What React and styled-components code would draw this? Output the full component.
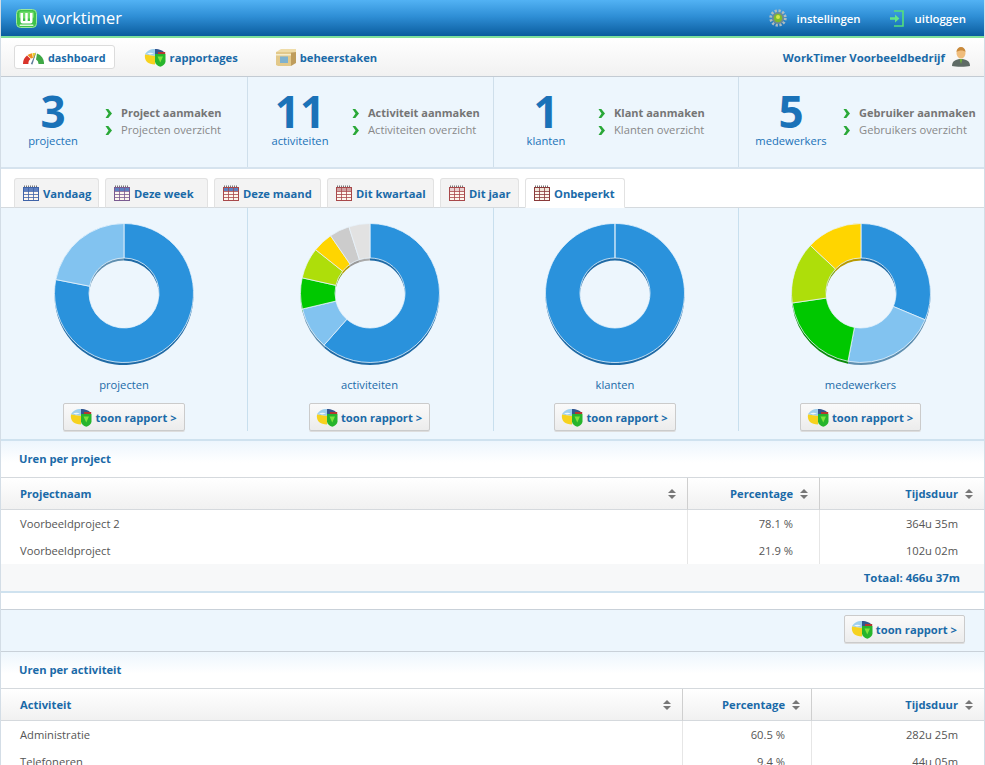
import { styled, createGlobalStyle } from 'styled-components';

const GlobalStyle = createGlobalStyle`
  html, body {
    margin: 0;
    padding: 0;
    overflow: hidden;
    background: #fff;
    font-family: "Open Sans", "Liberation Sans", sans-serif;
    font-size: 11.2px;
    color: #555;
  }
`;

const Page = styled.div`
  width: 985px;
  height: 765px;
  overflow: hidden;
  box-sizing: border-box;
  border-left: 1px solid #d3dde6;
  border-right: 1px solid #d3dde6;
`;

const Header = styled.header`
  height: 36px;
  margin: 0 -1px;
  display: flex;
  align-items: center;
  justify-content: space-between;
  padding: 0 19px 0 16px;
  background: linear-gradient(to bottom, #52b2f4, #2f8fd6 45%, #0a5c9e);
  border-bottom: 2px solid #7fe09c;
`;

const Logo = styled.div`
  display: flex;
  align-items: center;
  gap: 6px;
  color: #fff;
  font-size: 16.4px;
  line-height: 24px;
`;

const HeaderLinks = styled.div`
  display: flex;
  align-items: center;
  gap: 28px;
`;

const HeaderLink = styled.a`
  display: flex;
  align-items: center;
  gap: ${(p) => p.$gap || 10}px;
  color: #fff;
  font-weight: 600;
  font-size: 11.4px;
`;

const Nav = styled.nav`
  height: 38px;
  display: flex;
  align-items: center;
  padding: 0 14px 0 13px;
  background: linear-gradient(to bottom, #fff, #f1f1f1);
  border-bottom: 1px solid #c3cbd3;
`;

const NavItem = styled.a`
  display: flex;
  align-items: center;
  gap: 4px;
  height: 24px;
  box-sizing: border-box;
  padding: 0 8px;
  margin-right: ${(p) => p.$space}px;
  color: #1a6aa8;
  font-weight: 700;
  font-size: ${(p) => (p.$active ? '10.8px' : '11.2px')};
  background: ${(p) => (p.$active ? '#fff' : 'transparent')};
  border: 1px solid ${(p) => (p.$active ? '#dcdcdc' : 'transparent')};
  border-radius: 3px;
`;

const Company = styled.div`
  margin-left: auto;
  display: flex;
  align-items: center;
  gap: 7px;
  color: #1a6aa8;
  font-weight: 700;
  font-size: 11.4px;
`;

const Columns = styled.div`
  display: grid;
  grid-template-columns: 247px 246px 245px 1fr;
`;

const StatsBar = styled(Columns)`
  height: 90px;
  background: #edf6fd;
  border-bottom: 2px solid #d6e3ee;
`;

const StatCell = styled.div`
  display: grid;
  grid-template-columns: 104px 1fr;
  align-items: center;
  border-right: ${(p) => (p.$last ? 'none' : '1px solid #cfdfeb')};
`;

const StatCount = styled.div`
  display: flex;
  flex-direction: column;
  align-items: center;
  color: #1a72b8;
`;

const StatNumber = styled.div`
  font-size: 44px;
  font-weight: 700;
  line-height: 33px;
  margin-bottom: 5px;
`;

const StatLabel = styled.div`
  line-height: 16px;
`;

const StatLinks = styled.div`
  display: flex;
  flex-direction: column;
  gap: 1px;
  padding-bottom: 1px;
`;

const StatLink = styled.a`
  display: flex;
  align-items: center;
  gap: 9px;
  line-height: 16px;
  white-space: nowrap;
  color: ${(p) => (p.$strong ? '#757575' : '#888')};
  font-weight: ${(p) => (p.$strong ? 700 : 400)};
  font-size: ${(p) => (p.$strong ? '11px' : '11.2px')};
`;

const TabBar = styled.div`
  height: 38px;
  display: flex;
  align-items: flex-end;
  gap: 6px;
  padding-left: 13px;
  border-bottom: 1px solid #d5dade;
`;

const Tab = styled.a`
  width: ${(p) => p.$width}px;
  height: 30px;
  box-sizing: border-box;
  display: flex;
  align-items: center;
  gap: 4px;
  padding-left: 8px;
  margin-bottom: -1px;
  color: #1a6aa8;
  font-weight: 700;
  background: ${(p) => (p.$active ? '#fff' : '#f3f3f3')};
  border: 1px solid #e2e2e2;
  border-bottom: ${(p) => (p.$active ? '1px solid #fff' : '1px solid #d5dade')};
  border-radius: 3px 3px 0 0;
`;

const ChartRow = styled(Columns)`
  background: #edf6fd;
  height: 231px;
  border-bottom: 2px solid #cfe2ef;
`;

const ChartCell = styled.div`
  height: 223px;
  display: flex;
  flex-direction: column;
  align-items: center;
  padding-top: 10px;
  box-sizing: border-box;
  border-right: ${(p) => (p.$last ? 'none' : '1px solid #c8dfee')};
  &:not(:first-child) {
    padding-right: 2px;
  }
`;

const ChartLabel = styled.div`
  color: #1a6aa8;
  line-height: 16px;
  margin-top: 9px;
`;

const ReportButton = styled.a`
  height: 28px;
  box-sizing: border-box;
  display: flex;
  align-items: center;
  gap: 3px;
  padding: 0 7px 0 6px;
  margin-top: ${(p) => p.$top || 0}px;
  color: #1a6aa8;
  font-weight: 700;
  background: linear-gradient(to bottom, #fafafa, #ececec);
  border: 1px solid #cbcbcb;
  border-radius: 2px;
  box-shadow: 0 1px 0 #ddd;
`;

const SectionTitle = styled.h2`
  margin: 0;
  height: 36px;
  padding-left: 18px;
  font-size: 11.2px;
  font-weight: 700;
  line-height: 35px;
  color: #1a6aa8;
  background: linear-gradient(to bottom, #edf6fd, #fff 60%);
  border-bottom: 1px solid #d5d9dd;
`;

const TableRow = styled.div`
  display: grid;
  grid-template-columns: ${(p) => p.$cols};
`;

const HeadCell = styled.div`
  height: 32px;
  display: flex;
  align-items: center;
  justify-content: ${(p) => (p.$left ? 'space-between' : 'flex-end')};
  gap: 7px;
  padding: 0 11px 0 19px;
  box-sizing: border-box;
  color: #1a6aa8;
  font-weight: 700;
  background: linear-gradient(to bottom, #fff, #f1f1f1);
  border-bottom: 1px solid #d5d9dd;
  border-right: ${(p) => (p.$last ? 'none' : '1px solid #cfcfcf')};
`;

const BodyCell = styled.div`
  height: 27px;
  line-height: 27px;
  padding: 0 26px 0 19px;
  color: #555;
  text-align: ${(p) => (p.$left ? 'left' : 'right')};
  border-right: ${(p) => (p.$last ? 'none' : '1px solid #e6e6e6')};
`;

const TotalRow = styled.div`
  height: 27px;
  line-height: 27px;
  text-align: right;
  padding-right: 24px;
  color: #1a6aa8;
  font-weight: 700;
  font-size: 11.4px;
  background: #f7f8f9;
  border-bottom: 2px solid #cfe2ef;
`;

const Spacer = styled.div`
  height: 16px;
  border-bottom: 1px solid #c9d1d9;
`;

const ActionBar = styled.div`
  height: 41px;
  display: flex;
  align-items: center;
  justify-content: flex-end;
  padding-right: 19px;
  background: #edf6fd;
  border-bottom: 1px solid #c9d1d9;
`;

const ActionSlot = styled.div`
  margin-bottom: 3px;
`;

const polar = (r, pct, cx, cy) => {
  const a = (pct / 100) * Math.PI * 2;
  return [cx + r * Math.sin(a), cy - r * Math.cos(a)];
};

// ring segment between two percentages
const slicePath = (from, to, cx, cy) => {
  const outer = 69.5;
  const inner = 35;
  const end = to >= 100 ? 99.99 : to;
  const large = end - from > 50 ? 1 : 0;
  const [x1, y1] = polar(outer, from, cx, cy);
  const [x2, y2] = polar(outer, end, cx, cy);
  const [x3, y3] = polar(inner, end, cx, cy);
  const [x4, y4] = polar(inner, from, cx, cy);
  return `M${x1} ${y1}A${outer} ${outer} 0 ${large} 1 ${x2} ${y2}L${x3} ${y3}A${inner} ${inner} 0 ${large} 0 ${x4} ${y4}Z`;
};

function Donut({ slices }) {
  const spans = [];
  let total = 0;
  slices.forEach(([pct, color, shade]) => {
    spans.push({ from: total, to: total + pct, color, shade });
    total += pct;
  });
  return (
    <svg width="150" height="150" viewBox="0 0 150 150">
      {spans.map((s) => (
        <path key={s.color} d={slicePath(s.from, s.to, 75, 77.5)} fill={s.shade} />
      ))}
      {spans.map((s) => (
        <path key={s.color} d={slicePath(s.from, s.to, 75, 75)} fill={s.color} stroke="#e8f4fc" strokeWidth="0.8" />
      ))}
    </svg>
  );
}

const BLUE = ['#2a92dc', '#1f6aa5'];
const LIGHT = ['#82c3f0', '#5f8fb0'];
const GREEN = ['#00c800', '#0a8a0a'];
const LIME = ['#aede0a', '#7ea008'];
const YELLOW = ['#ffd500', '#b89a00'];
const GRAY = ['#cccccc', '#999999'];
const PALE = ['#e2e2e2', '#aaaaaa'];

const charts = [
  { label: 'projecten', slices: [[78.1, ...BLUE], [21.9, ...LIGHT]] },
  {
    label: 'activiteiten',
    slices: [[61.5, ...BLUE], [9.8, ...LIGHT], [7.2, ...GREEN], [7.2, ...LIME], [4.7, ...YELLOW], [4.7, ...GRAY], [4.9, ...PALE]],
  },
  { label: 'klanten', slices: [[100, ...BLUE]] },
  {
    label: 'medewerkers',
    slices: [[31.3, ...BLUE], [21.7, ...LIGHT], [19.7, ...GREEN], [14.3, ...LIME], [13, ...YELLOW]],
  },
];

const stats = [
  { n: 3, label: 'projecten', make: 'Project aanmaken', list: 'Projecten overzicht' },
  { n: 11, label: 'activiteiten', make: 'Activiteit aanmaken', list: 'Activiteiten overzicht' },
  { n: 1, label: 'klanten', make: 'Klant aanmaken', list: 'Klanten overzicht' },
  { n: 5, label: 'medewerkers', make: 'Gebruiker aanmaken', list: 'Gebruikers overzicht' },
];

const tabs = [
  { label: 'Vandaag', width: 85, tone: '#3f63a8', head: '#5d7fc0' },
  { label: 'Deze week', width: 103, tone: '#7a5a90', head: '#5d7fc0' },
  { label: 'Deze maand', width: 107, tone: '#a8484a', head: '#5d7fc0' },
  { label: 'Dit kwartaal', width: 107, tone: '#a8484a', head: '#cfa0a0' },
  { label: 'Dit jaar', width: 79, tone: '#a8484a', head: '#e8d0d0' },
  { label: 'Onbeperkt', width: 100, tone: '#8a3a3a', head: '#f0e4d8', active: true },
];

function LogoIcon() {
  return (
    <svg width="21" height="19" viewBox="0 0 21 19">
      <rect x="0.5" y="0.5" width="20" height="18" rx="4" fill="#3fc24a" stroke="#9be89f" />
      <rect x="3" y="2.500" width="15" height="7" rx="2" fill="#6fdc6a" />
      <path d="M4.500 4v8.500a2 2 0 0 0 2 2h8a2 2 0 0 0 2-2V4h-2.500v8h-2.300V4h-2.400v8H7V4z" fill="#fff" />
      <rect x="3.500" y="15.500" width="14" height="1.500" rx="0.700" fill="#dff7dc" />
    </svg>
  );
}

function GearIcon() {
  return (
    <svg width="18" height="18" viewBox="0 0 18 18">
      <circle cx="9" cy="9" r="7.200" fill="none" stroke="#aebcc0" strokeWidth="3" strokeDasharray="2.200 1.600" />
      <circle cx="9" cy="9" r="6" fill="#6f8a94" />
      <circle cx="9" cy="9" r="4.200" fill="#7fbb2c" />
      <circle cx="9" cy="8" r="2" fill="#d8e84a" />
    </svg>
  );
}

function LogoutIcon() {
  return (
    <svg width="15" height="17" viewBox="0 0 15 17">
      <path d="M5 1h9v15H5" fill="none" stroke="#55e07a" strokeWidth="1.600" />
      <path d="M1 7.200h5V4.600l4.400 3.900L6 12.400V9.800H1z" fill="#63e585" />
    </svg>
  );
}

function GaugeIcon() {
  return (
    <svg width="21" height="16" viewBox="0 0 21 16">
      <path d="M0 15a10.500 10.500 0 0 1 4-8.500L7.500 10a5 5 0 0 0-2 5z" fill="#d9342b" />
      <path d="M4.500 6A10.500 10.500 0 0 1 9 4.200L10 9a5 5 0 0 0-2 .6z" fill="#ee8f1f" />
      <path d="M9.500 4a10.500 10.500 0 0 1 3.500.2L11.500 9H10.500z" fill="#e8cf2a" />
      <path d="M14 4.500A10.500 10.500 0 0 1 21 15h-5.500A5 5 0 0 0 13 10.500z" fill="#3fa846" />
      <path d="M13.500 2L9.500 15.500 7.800 15z" fill="#5f7d9a" />
    </svg>
  );
}

function PieIcon() {
  return (
    <svg width="22" height="19" viewBox="0 0 22 19">
      <path d="M11 8L1 6.500C2.500 3 6 1 11 1z" fill="#9fd0ee" />
      <path d="M1 6.500L11 8v8.500C4 16.500 0 13 1 6.500z" fill="#f6d21e" />
      <path d="M3 5.500C5 4.500 8 4.500 10 5.500L6 6.500z" fill="#eef7fc" />
      <path d="M11 7V1c4.500 0 8.500 1.500 10 4.500z" fill="#33558f" />
      <path d="M14 4h7.200v2H14z" fill="#b3372f" />
      <path d="M11 6h10.500v7.500c0 2.500-2.700 4.300-5.250 5.300C13.700 17.800 11 16 11 13.500z" fill="#27b52c" />
      <path d="M13.500 8.500h5.500l-2.750 6z" fill="#7fe33c" />
    </svg>
  );
}

function BoxIcon() {
  return (
    <svg width="20" height="17" viewBox="0 0 20 17">
      <path d="M0 3l5-3h15v3l-5 1z" fill="#efdca8" />
      <path d="M0 3h15v14H2l-2-1z" fill="#e3c98a" />
      <path d="M15 3.500l5-.5v11l-5 3z" fill="#bf9d5c" />
      <rect x="4" y="7.500" width="8" height="6.500" fill="#7fb2cf" />
      <rect x="0" y="5" width="15" height="1.500" fill="#f5eccc" />
    </svg>
  );
}

function PersonIcon() {
  return (
    <svg width="18" height="20" viewBox="0 0 18 20">
      <path d="M0 19c0-5 4-7 9-7s9 2 9 7c-3 1-15 1-18 0z" fill="#5f6b66" />
      <path d="M7.500 12h3L9 17z" fill="#6cae3e" />
      <ellipse cx="9" cy="6" rx="4.500" ry="5.500" fill="#f0bd7c" />
      <path d="M4.500 5c0-3 2-5 4.500-5s4.500 2 4.500 5c-2-2-6-2-9 0z" fill="#c98a3c" />
    </svg>
  );
}

function CalendarIcon({ tone, head }) {
  return (
    <svg width="16" height="16" viewBox="0 0 16 16">
      <rect x="0.500" y="2.500" width="15" height="13" fill="#fdf6ee" stroke={tone} />
      <rect x="1" y="3" width="14" height="3" fill={head} />
      <path d="M1 1.200h14" stroke="#777" strokeWidth="1.400" strokeDasharray="1 1" />
      <path d="M5.500 3v12M10.500 3v12M1 6.500h14M1 9.500h14M1 12.500h14" stroke={tone} strokeWidth="0.800" />
    </svg>
  );
}

function Chevron() {
  return (
    <svg width="7" height="9" viewBox="0 0 7 9">
      <path d="M0.500 0h2.800L7 4.500 3.300 9H0.500l3-4.500z" fill="#2aa838" />
    </svg>
  );
}

function SortIcon() {
  return (
    <svg width="8" height="10" viewBox="0 0 8 10">
      <path d="M4 0l4 4H0zM4 10L0 6h8z" fill="#777" />
    </svg>
  );
}

function Report({ top }) {
  return (
    <ReportButton $top={top}>
      <PieIcon />
      toon rapport &gt;
    </ReportButton>
  );
}

function HoursTable({ cols, nameTitle, rows }) {
  return (
    <>
      <TableRow $cols={cols}>
        <HeadCell $left>
          {nameTitle}
          <SortIcon />
        </HeadCell>
        <HeadCell>
          Percentage
          <SortIcon />
        </HeadCell>
        <HeadCell $last>
          Tijdsduur
          <SortIcon />
        </HeadCell>
      </TableRow>
      {rows.map((r) => (
        <TableRow $cols={cols} key={r[0]}>
          <BodyCell $left>{r[0]}</BodyCell>
          <BodyCell>{r[1]}</BodyCell>
          <BodyCell $last>{r[2]}</BodyCell>
        </TableRow>
      ))}
    </>
  );
}

function App() {
  return (
    <>
      <GlobalStyle />
      <Page>
        <Header>
          <Logo>
            <LogoIcon />
            worktimer
          </Logo>
          <HeaderLinks>
            <HeaderLink>
              <GearIcon />
              instellingen
            </HeaderLink>
            <HeaderLink $gap={11}>
              <LogoutIcon />
              uitloggen
            </HeaderLink>
          </HeaderLinks>
        </Header>
        <Nav>
          <NavItem $active $space={20}>
            <GaugeIcon />
            dashboard
          </NavItem>
          <NavItem $space={20}>
            <PieIcon />
            rapportages
          </NavItem>
          <NavItem>
            <BoxIcon />
            beheerstaken
          </NavItem>
          <Company>
            WorkTimer Voorbeeldbedrijf
            <PersonIcon />
          </Company>
        </Nav>
        <StatsBar>
          {stats.map((s, i) => (
            <StatCell key={s.label} $last={i === 3}>
              <StatCount>
                <StatNumber>{s.n}</StatNumber>
                <StatLabel>{s.label}</StatLabel>
              </StatCount>
              <StatLinks>
                <StatLink $strong>
                  <Chevron />
                  {s.make}
                </StatLink>
                <StatLink>
                  <Chevron />
                  {s.list}
                </StatLink>
              </StatLinks>
            </StatCell>
          ))}
        </StatsBar>
        <TabBar>
          {tabs.map((t) => (
            <Tab key={t.label} $active={t.active} $width={t.width}>
              <CalendarIcon tone={t.tone} head={t.head} />
              {t.label}
            </Tab>
          ))}
        </TabBar>
        <ChartRow>
          {charts.map((c, i) => (
            <ChartCell key={c.label} $last={i === 3}>
              <Donut slices={c.slices} />
              <ChartLabel>{c.label}</ChartLabel>
              <Report top={10} />
            </ChartCell>
          ))}
        </ChartRow>
        <SectionTitle>Uren per project</SectionTitle>
        <HoursTable
          cols="687px 132px 1fr"
          nameTitle="Projectnaam"
          rows={[
            ['Voorbeeldproject 2', '78.1 %', '364u 35m'],
            ['Voorbeeldproject', '21.9 %', '102u 02m'],
          ]}
        />
        <TotalRow>Totaal: 466u 37m</TotalRow>
        <Spacer />
        <ActionBar>
          <ActionSlot>
            <Report />
          </ActionSlot>
        </ActionBar>
        <SectionTitle>Uren per activiteit</SectionTitle>
        <HoursTable
          cols="682px 129px 1fr"
          nameTitle="Activiteit"
          rows={[
            ['Administratie', '60.5 %', '282u 25m'],
            ['Telefoneren', '9.4 %', '44u 05m'],
          ]}
        />
      </Page>
    </>
  );
}

export default App;
